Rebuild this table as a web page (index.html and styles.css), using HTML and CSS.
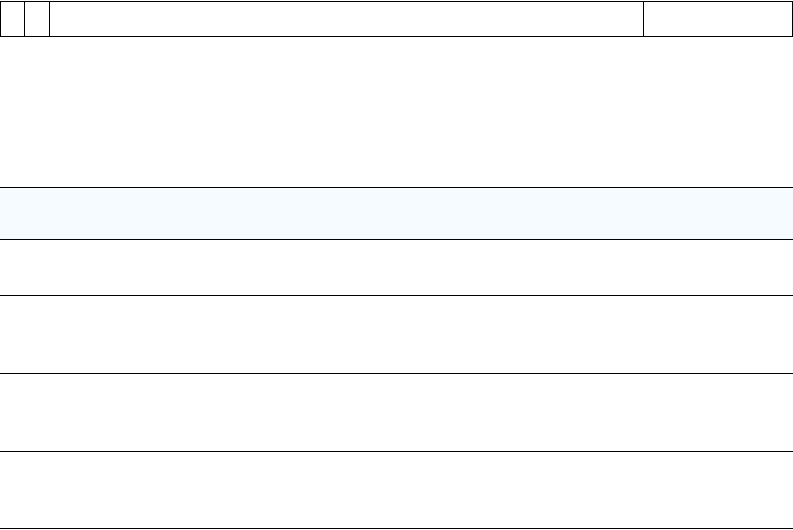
FILE: index.html
```html
<!DOCTYPE html>
<html lang="en">
<head>
  <meta charset="UTF-8">
  <meta name="viewport" content="width=device-width, initial-scale=1.0">
  <title>Table</title>
  <link rel="stylesheet" href="styles.css">
</head>
<body>

<div class="toolbar">
  <div class="cell cell-a"></div>
  <div class="cell cell-b"></div>
  <div class="cell cell-main"></div>
  <div class="cell cell-end"></div>
</div>

<div class="grid">
  <div class="row head"></div>
  <div class="row r1"></div>
  <div class="row r2"></div>
  <div class="row r3"></div>
  <div class="row r4"></div>
</div>

</body>
</html>
```

FILE: styles.css
```css
body {
  font-family: "Liberation Sans", Arial, sans-serif;
  background-color: #ffffff;
  margin: 0;
  padding: 0;
}
.toolbar {
  display: flex;
  margin-top: 1px;
  height: 34px;
  border: 1px solid #000;
}
.cell {
  border-right: 1px solid #000;
}
.cell-a {
  width: 23px;
}
.cell-b {
  width: 24px;
}
.cell-main {
  width: 593px;
}
.cell-end {
  flex: 1;
  border-right: none;
}
.grid {
  margin-top: 150px;
  border-top: 1px solid #000;
}
.row {
  border-bottom: 1px solid #000;
}
.head {
  height: 51px;
  background-color: #f5fbff;
}
.r1 {
  height: 55px;
}
.r2,
.r3 {
  height: 77px;
}
.r4 {
  height: 76px;
}
```
